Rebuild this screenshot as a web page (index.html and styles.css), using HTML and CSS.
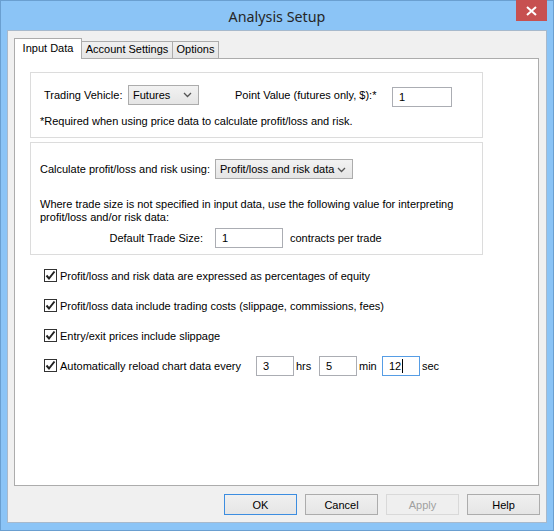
FILE: index.html
```html
<!DOCTYPE html>
<html>
<head>
<meta charset="utf-8">
<link rel="stylesheet" href="styles.css">
</head>
<body>
<div class="window">
  <div class="titlebar">
    <div class="title">Analysis Setup</div>
    <div class="close"><svg width="11" height="10" viewBox="0 0 11 10"><path d="M1 1 L10 9 M10 1 L1 9" stroke="#fff" stroke-width="2"/></svg></div>
  </div>
  <div class="client">
    <div class="tabs">
      <div class="tab active">Input Data</div>
      <div class="tab">Account Settings</div>
      <div class="tab">Options</div>
    </div>
    <div class="panel">
      <div class="group g1">
        <div class="row r1">
          <span class="lbl tv">Trading Vehicle:</span>
          <div class="select s1"><span>Futures</span><svg class="chev" width="9" height="6" viewBox="0 0 9 6"><path d="M1 1 L4.5 4.5 L8 1" fill="none" stroke="#555" stroke-width="1.3"/></svg></div>
          <span class="lbl pv">Point Value (futures only, $):*</span>
          <div class="input i1">1</div>
        </div>
        <div class="note">*Required when using price data to calculate profit/loss and risk.</div>
      </div>
      <div class="group g2">
        <div class="row r2">
          <span class="lbl calc">Calculate profit/loss and risk using:</span>
          <div class="select s2"><span>Profit/loss and risk data</span><svg class="chev" width="9" height="6" viewBox="0 0 9 6"><path d="M1 1 L4.5 4.5 L8 1" fill="none" stroke="#555" stroke-width="1.3"/></svg></div>
        </div>
        <div class="para">Where trade size is not specified in input data, use the following value for interpreting<br>profit/loss and/or risk data:</div>
        <div class="row r3">
          <span class="lbl dts">Default Trade Size:</span>
          <div class="input i2">1</div>
          <span class="lbl cpt">contracts per trade</span>
        </div>
      </div>
      <div class="checks">
        <div class="check"><span class="box"><svg width="11" height="11" viewBox="0 0 11 11"><path d="M1.5 5.5 L4 8.5 L9.5 1.5" fill="none" stroke="#222" stroke-width="2"/></svg></span><span>Profit/loss and risk data are expressed as percentages of equity</span></div>
        <div class="check"><span class="box"><svg width="11" height="11" viewBox="0 0 11 11"><path d="M1.5 5.5 L4 8.5 L9.5 1.5" fill="none" stroke="#222" stroke-width="2"/></svg></span><span>Profit/loss data include trading costs (slippage, commissions, fees)</span></div>
        <div class="check"><span class="box"><svg width="11" height="11" viewBox="0 0 11 11"><path d="M1.5 5.5 L4 8.5 L9.5 1.5" fill="none" stroke="#222" stroke-width="2"/></svg></span><span>Entry/exit prices include slippage</span></div>
        <div class="check"><span class="box"><svg width="11" height="11" viewBox="0 0 11 11"><path d="M1.5 5.5 L4 8.5 L9.5 1.5" fill="none" stroke="#222" stroke-width="2"/></svg></span><span class="auto">Automatically reload chart data every</span>
          <div class="input i3">3</div><span class="unit">hrs</span>
          <div class="input i3">5</div><span class="unit">min</span>
          <div class="input i3 focus">12<span class="caret"></span></div><span class="unit">sec</span>
        </div>
      </div>
    </div>
    <div class="buttons">
      <div class="btn default">OK</div>
      <div class="btn">Cancel</div>
      <div class="btn disabled">Apply</div>
      <div class="btn">Help</div>
    </div>
  </div>
</div>
</body>
</html>
```

FILE: styles.css
```css
* { box-sizing: border-box; }
html, body { margin: 0; padding: 0; }
body {
  width: 554px; height: 531px; overflow: hidden;
  font-family: "Liberation Sans", Arial, sans-serif;
  font-size: 11px; color: #000; white-space: nowrap;
}
.window {
  width: 554px; height: 531px;
  background: #8bc4f6;
  border: 1px solid #6a9fd0;
  display: flex; flex-direction: column;
}
.titlebar {
  height: 29px; position: relative;
  display: flex; align-items: center; justify-content: center;
}
.title {
  font-family: "Noto Sans", sans-serif;
  font-size: 14.3px; color: #262626; margin-top: 1px;
}
.close {
  position: absolute; right: 6px; top: -1px;
  width: 31px; height: 21px; background: #c75050;
  display: flex; align-items: center; justify-content: center;
}
.client {
  margin: 0 6px 0 6px;
  height: 493px;
  background: #f0f0f0;
  border: 1px solid #a7b9cc;
  display: flex; flex-direction: column;
  padding: 7px 0 0 6px;
}
.tabs { display: flex; align-items: flex-end; height: 20px; position: relative; z-index: 1; }
.tab {
  height: 17px; line-height: 15px; text-align: center;
  border: 1px solid #acacac; border-bottom: none;
  background: linear-gradient(#f0f0f0, #e5e5e5);
  margin-left: -1px; flex: none;
}
.tab.active {
  height: 21px; background: #fff; margin-left: 0;
  line-height: 18px; margin-bottom: -1px;
  position: relative; z-index: 2; width: 68px;
}
.tab:nth-child(2) { width: 92px; }
.tab:nth-child(3) { width: 47px; }
.panel {
  width: 525px; height: 428px;
  background: #fff; border: 1px solid #acacac;
  padding: 13px 0 0 15px;
}
.group {
  width: 453px; border: 1px solid #dcdcdc;
  padding: 0 0 0 9px;
}
.g1 { height: 66px; padding-top: 9px; }
.g2 { height: 113px; margin-top: 4px; padding-top: 16px; }
.row { display: flex; align-items: center; }
.row > * { flex: none; }
.tv { width: 84px; margin-left: 4px; }
.select {
  height: 20px; border: 1px solid #acacac;
  background: linear-gradient(#f2f2f2, #e5e5e5);
  display: flex; align-items: center; justify-content: space-between;
  padding: 0 6px 0 4px;
}
.s1 { width: 71px; }
.calc { width: 175px; }
.s2 { width: 138px; }
.chev { margin-top: 1px; }
.pv { margin-left: 36px; width: 157px; }
.input {
  height: 20px; border: 1px solid #abadb3; background: #fff;
  padding: 0 0 0 6px; line-height: 18px; flex: none;
}
.i1 { width: 60px; margin-top: 5px; }
.note { margin-top: 8px; }
.para { margin-top: 19px; line-height: 13px; }
.r3 { margin-top: 4px; }
.dts { width: 175px; text-align: right; padding-right: 12px; }
.i2 { width: 68px; }
.cpt { margin-left: 7px; }
.checks { padding: 14px 0 0 14px; display: flex; flex-direction: column; gap: 17px; }
.check { display: flex; align-items: center; height: 13px; }
.box {
  width: 13px; height: 13px; border: 1px solid #333; background: #fff;
  display: flex; align-items: center; justify-content: center;
  margin-right: 3px; flex: none;
}
.auto { width: 196px; flex: none; }
.i3 { width: 38px; }
.unit { width: 25px; padding-left: 2px; flex: none; }
.i3.focus { border-color: #569de5; position: relative; }
.caret {
  display: inline-block; width: 1px; height: 14px; background: #000;
  vertical-align: middle; margin-left: 1px; margin-top: -2px;
}
.buttons {
  display: flex; justify-content: flex-end; gap: 8px;
  padding: 8px 6px 0 0;
}
.btn {
  width: 73px; height: 21px; border: 1px solid #acacac;
  background: linear-gradient(#f0f0f0, #e5e5e5);
  display: flex; align-items: center; justify-content: center;
}
.btn.default { border-color: #3c8de0; }
.btn.disabled { border-color: #d9d9d9; background: #efefef; color: #a0a0a0; }
```
